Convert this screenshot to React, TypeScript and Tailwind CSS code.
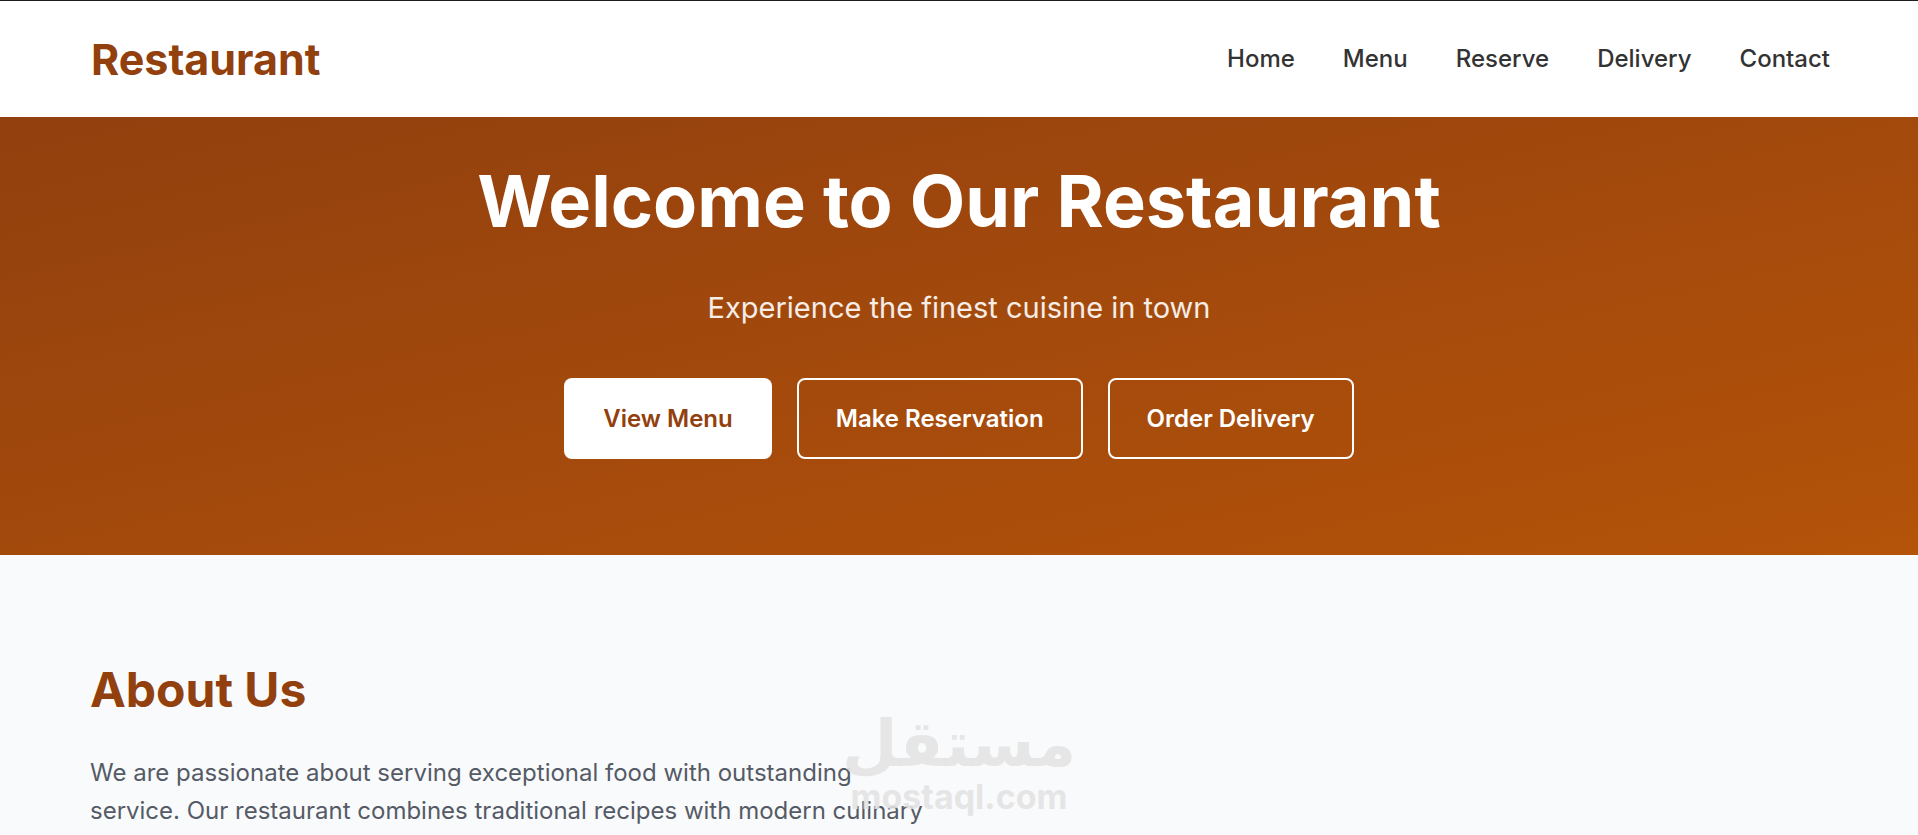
const navigation = ['Home', 'Menu', 'Reserve', 'Delivery', 'Contact'];

export default function App() {
  return (
    <div className="relative min-h-screen overflow-hidden bg-gray-50 font-['Inter',sans-serif]">
      {/* Header */}
      <header className="border-t border-[#1c1c1c] bg-white">
        <div className="flex h-[116px] items-center justify-between pl-[91px] pr-[88px]">
          <a href="#" className="text-[43px] font-bold leading-none text-[#92400e]">
            Restaurant
          </a>
          <nav className="flex items-center gap-[48px]">
            {navigation.map((item) => (
              <a key={item} href="#" className="text-[24px] font-medium leading-none text-[#333]">
                {item}
              </a>
            ))}
          </nav>
        </div>
      </header>

      {/* Hero */}
      <section className="flex flex-col items-center bg-linear-to-br from-[#92400e] to-[#b45309] pt-[48px] pb-[96px] text-white">
        <h1 className="text-[72px] font-bold leading-none">Welcome to Our Restaurant</h1>
        <p className="mt-[56px] text-[29px] leading-none text-white/90">
          Experience the finest cuisine in town
        </p>
        <div className="mt-[56px] flex gap-[25px]">
          <a
            href="#"
            className="flex h-[81px] items-center rounded-lg bg-white px-[39px] text-[24px] font-semibold text-[#92400e]"
          >
            View Menu
          </a>
          <a
            href="#"
            className="flex h-[81px] items-center rounded-lg border-2 border-white px-[37px] text-[24px] font-semibold"
          >
            Make Reservation
          </a>
          <a
            href="#"
            className="flex h-[81px] items-center rounded-lg border-2 border-white px-[37px] text-[24px] font-semibold"
          >
            Order Delivery
          </a>
        </div>
      </section>

      {/* About */}
      <section className="px-[90px] pt-[111px]">
        <div className="max-w-[850px]">
          <h2 className="text-[48px] font-bold leading-none text-[#92400e]">About Us</h2>
          <p className="mt-[40px] text-[24px] leading-[38px] text-[#555b66]">
            We are passionate about serving exceptional food with outstanding
            <br />
            service. Our restaurant combines traditional recipes with modern culinary
            techniques to create unforgettable dining experiences.
          </p>
        </div>
      </section>

      {/* Watermark */}
      <div className="pointer-events-none absolute left-1/2 top-[712px] flex -translate-x-1/2 flex-col items-center gap-[4px] text-[#e3e3e3]/90">
        <span className="font-['DejaVu_Sans',sans-serif] text-[64px] font-bold leading-none">مستقل</span>
        <span className="text-[34px] font-bold leading-none">mostaql.com</span>
      </div>
    </div>
  );
}
